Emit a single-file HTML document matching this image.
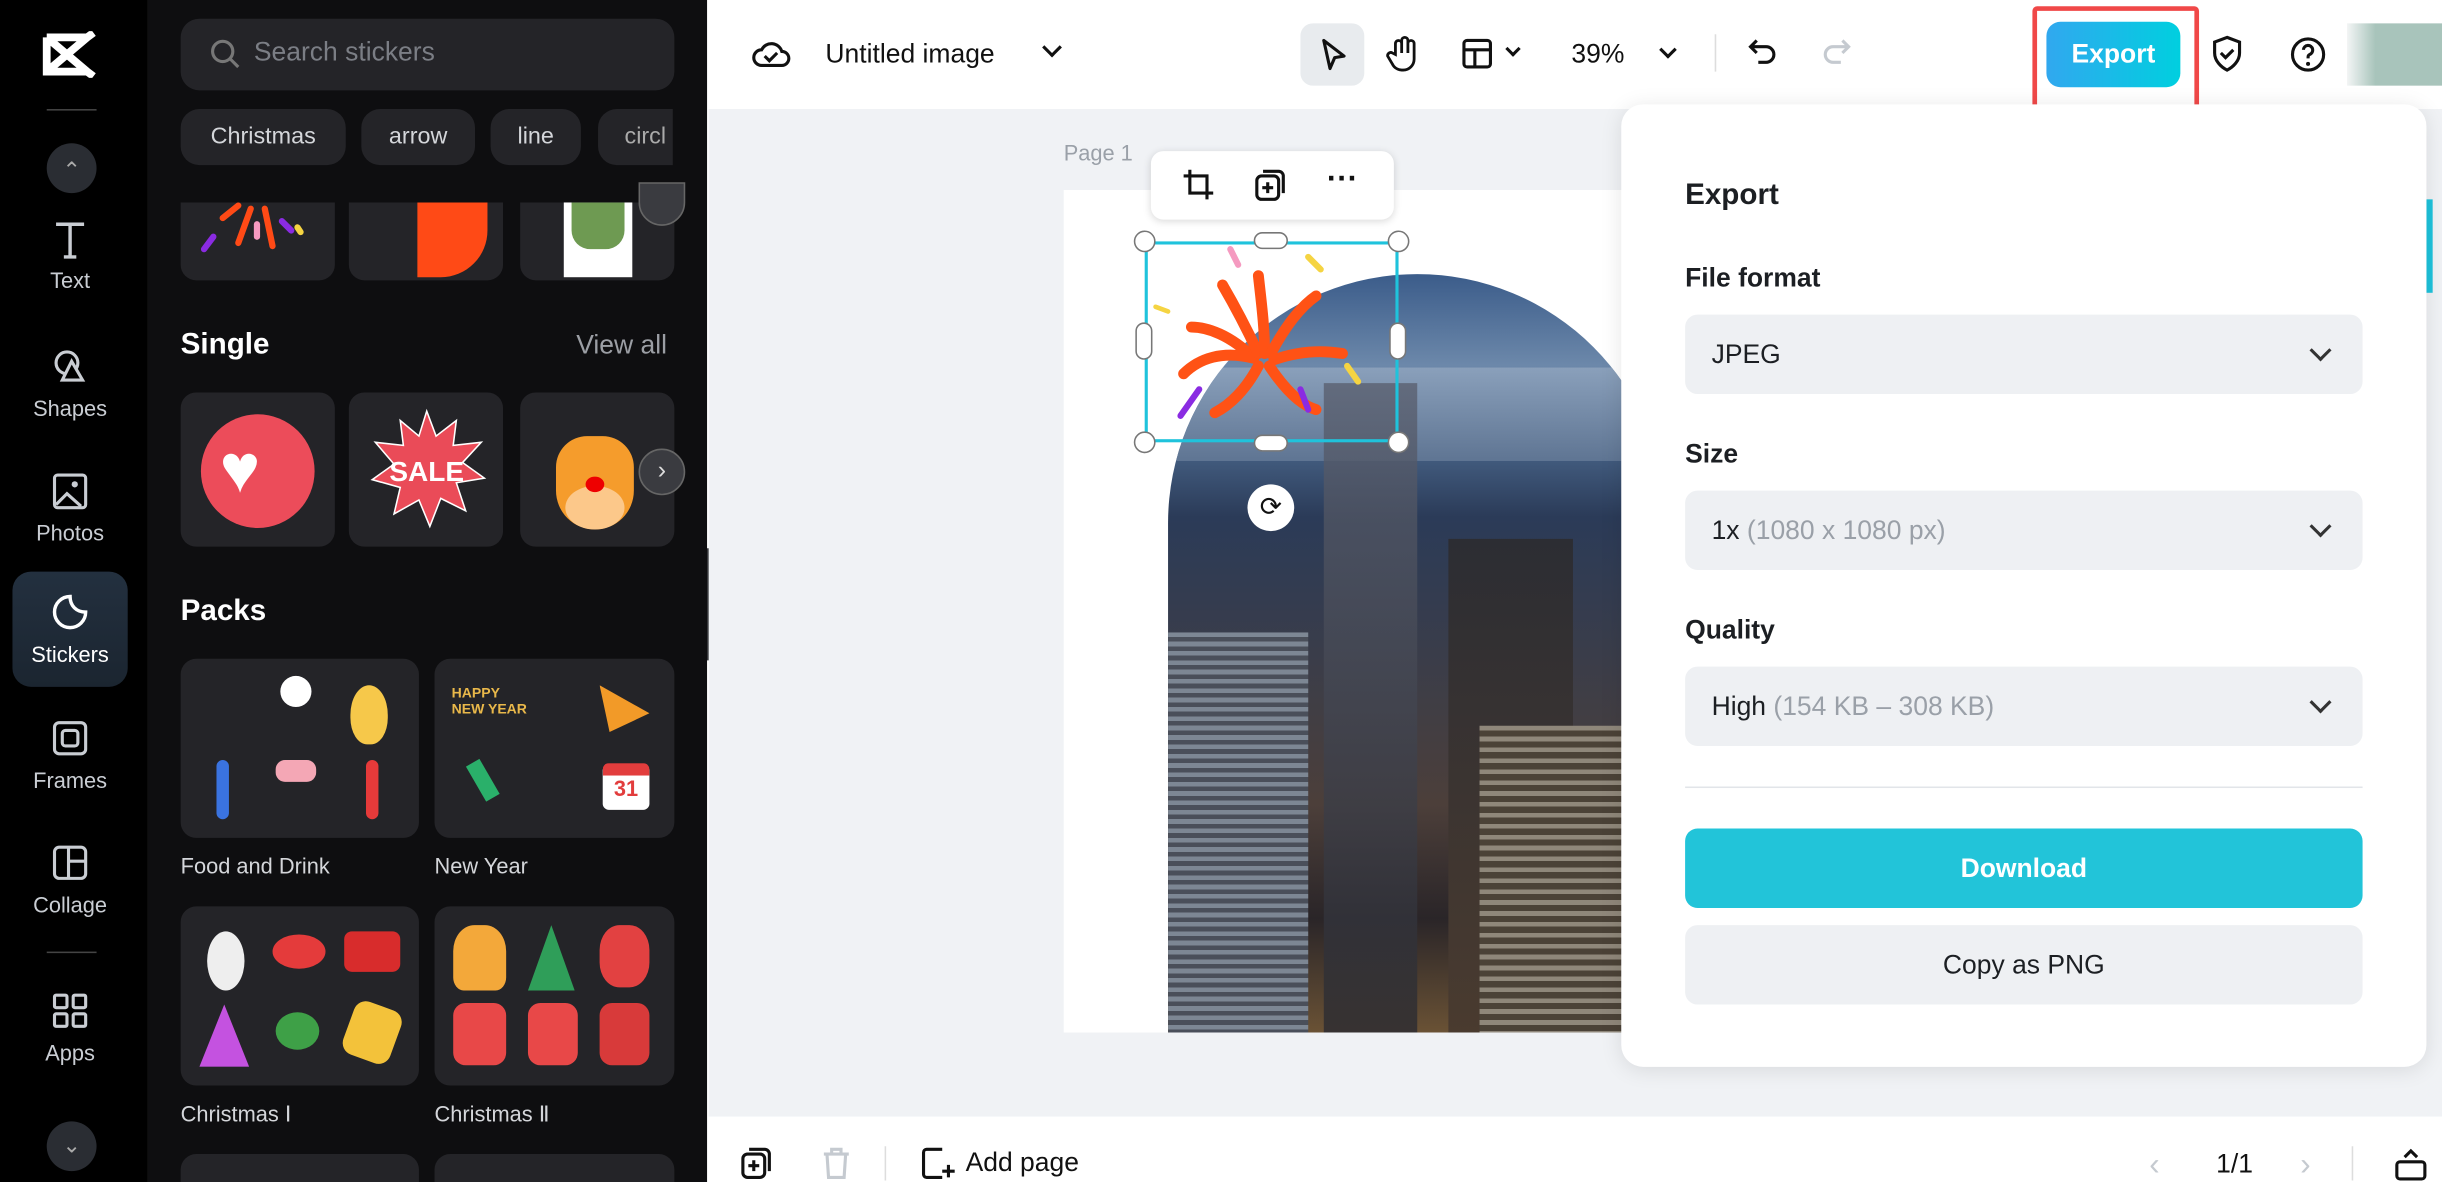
<!DOCTYPE html>
<html><head><meta charset="utf-8"><style>
*{box-sizing:border-box;margin:0;padding:0}
html,body{width:2442px;height:1182px;overflow:hidden;background:#fff;font-family:"Liberation Sans",sans-serif}
#w{position:absolute;left:0;top:0;width:1568px;height:759px;transform:scale(1.55740);transform-origin:0 0;overflow:hidden}
.a{position:absolute}
.nav{left:0;top:0;width:95px;height:759px;background:#000}
.ni{position:absolute;left:0;width:90px;text-align:center;color:#c9cdd3;font-size:14px}
.ni svg{display:block;margin:0 auto 4px}
.panel{left:95px;top:0;width:359px;height:759px;background:#0e0e10}
.card{position:absolute;background:#242428;border-radius:10px}
.chip{position:absolute;top:70px;height:36px;border-radius:12px;background:#242428;color:#d4d6da;font-size:15px;line-height:36px;text-align:center}
.h{position:absolute;color:#fff;font-weight:bold;font-size:19px}
.lbl{position:absolute;color:#d4d6da;font-size:14px}
.top{left:455px;top:0;width:1113px;height:70px;background:#fff}
.canvas{left:455px;top:70px;width:1113px;height:647px;background:#f0f2f5}
.bot{left:455px;top:717px;width:1113px;height:42px;background:#fff}
.dd{position:absolute;left:1082px;width:435px;height:51px;border-radius:8px;background:#eef0f3;font-size:17px;color:#1c1f23;line-height:51px;padding-left:17px}
.dd span{color:#9aa0a8}
.dd i{position:absolute;right:22px;top:18px;width:10px;height:10px;border-right:2px solid #333;border-bottom:2px solid #333;transform:rotate(45deg)}
.fl{position:absolute;left:1082px;font-size:17px;color:#1c1f23;font-weight:bold}
.hdl{position:absolute;width:14px;height:14px;border-radius:50%;background:#fff;border:1px solid #777}
</style></head><body><div id="w">
<div class="a nav">
 <svg class="a" style="left:27px;top:20px" width="36" height="30" viewBox="0 0 36 30"><path d="M3 4h26l4-3M3 4v22h26l4 3M3 4l26 22M29 4L3 26" stroke="#fff" stroke-width="5" fill="none"/></svg>
 <div class="a" style="left:30px;top:70px;width:32px;height:1px;background:#444"></div>
 <div class="a" style="left:30px;top:92px;width:32px;height:32px;border-radius:50%;background:#2a2d33;color:#aaa;text-align:center;line-height:34px;font-size:14px">&#8963;</div>
 <div class="ni" style="top:140px"><svg width="26" height="28"><path d="M4 4h18M13 4v21M9 25h8" stroke="#c9cdd3" stroke-width="2.2" fill="none"/></svg>Text</div>
 <div class="ni" style="top:222px"><svg width="26" height="28"><circle cx="11" cy="11" r="7" stroke="#c9cdd3" stroke-width="2" fill="none"/><path d="M14 10l7 12H8z" stroke="#c9cdd3" stroke-width="2" fill="#000"/></svg>Shapes</div>
 <div class="ni" style="top:302px"><svg width="26" height="28"><rect x="3" y="3" width="20" height="21" rx="2" stroke="#c9cdd3" stroke-width="2" fill="none"/><path d="M4 22l7-7 9 8" stroke="#c9cdd3" stroke-width="2" fill="none"/><circle cx="16" cy="9" r="2" fill="#c9cdd3"/></svg>Photos</div>
 <div class="a" style="left:8px;top:367px;width:74px;height:74px;border-radius:12px;background:linear-gradient(#23303f,#1b2530)"></div>
 <div class="ni" style="top:380px;color:#fff"><svg width="26" height="28"><path d="M13 3a10 10 0 1 0 10 10c-6 0-10-4-10-10z" stroke="#fff" stroke-width="2.2" fill="none"/></svg>Stickers</div>
 <div class="ni" style="top:461px"><svg width="26" height="28"><rect x="3" y="3" width="20" height="20" rx="3" stroke="#c9cdd3" stroke-width="2" fill="none"/><rect x="8" y="8" width="10" height="10" rx="2" stroke="#c9cdd3" stroke-width="2" fill="none"/></svg>Frames</div>
 <div class="ni" style="top:541px"><svg width="26" height="28"><rect x="3" y="3" width="20" height="20" rx="3" stroke="#c9cdd3" stroke-width="2" fill="none"/><path d="M12 3v20M12 12h11" stroke="#c9cdd3" stroke-width="2"/></svg>Collage</div>
 <div class="a" style="left:30px;top:611px;width:32px;height:1px;background:#444"></div>
 <div class="ni" style="top:636px"><svg width="26" height="28"><g stroke="#c9cdd3" stroke-width="2" fill="none"><rect x="3" y="3" width="8" height="8" rx="1"/><rect x="15" y="3" width="8" height="8" rx="1"/><rect x="3" y="15" width="8" height="8" rx="1"/><rect x="15" y="15" width="8" height="8" rx="1"/></g></svg>Apps</div>
 <div class="a" style="left:30px;top:720px;width:32px;height:32px;border-radius:50%;background:#2a2d33;color:#aaa;text-align:center;line-height:30px;font-size:14px">&#8964;</div>
</div>
<div class="a panel">
 <div class="card" style="left:21px;top:12px;width:317px;height:46px;border-radius:12px"></div>
 <svg class="a" style="left:40px;top:25px" width="20" height="20"><circle cx="8" cy="8" r="6.5" stroke="#777" stroke-width="2" fill="none"/><path d="M13 13l5 5" stroke="#777" stroke-width="2"/></svg>
 <div class="a" style="left:68px;top:24px;color:#7b7e85;font-size:17px">Search stickers</div>
 <div class="chip" style="left:21px;width:106px">Christmas</div>
 <div class="chip" style="left:137px;width:73px">arrow</div>
 <div class="chip" style="left:220px;width:58px">line</div>
 <div class="chip" style="left:289px;width:48px;text-align:left;padding-left:17px;overflow:hidden;color:#aaa;border-radius:12px 0 0 12px">circl</div>
 <div class="card" style="left:21px;top:130px;width:99px;height:50px;border-radius:0 0 10px 10px"></div>
 <div class="card" style="left:129px;top:130px;width:99px;height:50px;border-radius:0 0 10px 10px"></div>
 <div class="card" style="left:239px;top:130px;width:99px;height:50px;border-radius:0 0 10px 10px"></div>
 <svg class="a" style="left:30px;top:130px" width="80" height="36"><g stroke-linecap="round" fill="none" stroke-width="4"><path d="M28 2l-10 8" stroke="#ff4a16"/><path d="M36 4l-8 22" stroke="#ff4a16"/><path d="M45 4l5 24" stroke="#ff4a16"/><path d="M12 22l-6 8" stroke="#8a2be2"/><path d="M40 14v8" stroke="#f59ac0"/><path d="M56 12l6 6" stroke="#8a2be2"/><path d="M66 16l2 3" stroke="#f5d442"/></g></svg>
 <div class="a" style="left:173px;top:130px;width:45px;height:48px;background:#ff4a16;border-radius:0 0 30px 0"></div>
 <div class="a" style="left:267px;top:130px;width:44px;height:48px;background:#fff"></div>
 <div class="a" style="left:272px;top:130px;width:34px;height:30px;background:#6e9a52;border-radius:0 0 12px 12px"></div>
 <div class="h" style="left:21px;top:211px">Single</div>
 <div class="a" style="left:275px;top:212px;color:#9b9ea4;font-size:17px">View all</div>
 <div class="card" style="left:21px;top:252px;width:99px;height:99px"></div>
 <div class="card" style="left:129px;top:252px;width:99px;height:99px"></div>
 <div class="card" style="left:239px;top:252px;width:99px;height:99px"></div>
 <div class="a" style="left:34px;top:266px;width:73px;height:73px;border-radius:50%;background:#ec4c5a"></div>
 <div class="a" style="left:46px;top:280px;color:#fff;font-size:44px;line-height:44px">&#9829;</div>
 <svg class="a" style="left:140px;top:262px" width="78" height="78" viewBox="0 0 78 78"><polygon points="39,2 45,18 58,8 56,24 74,22 62,35 76,45 58,48 64,66 48,58 41,76 34,59 18,68 22,51 4,46 18,36 6,22 24,24 22,8 34,18" fill="#ea4b58" stroke="#fff" stroke-width="1"/><text x="39" y="47" font-size="18" font-weight="bold" fill="#fff" text-anchor="middle" font-family="Liberation Sans">SALE</text></svg>
 <div class="a" style="left:262px;top:280px;width:50px;height:60px;border-radius:20px 20px 25px 25px;background:#f59c2c"></div>
 <div class="a" style="left:268px;top:312px;width:38px;height:28px;border-radius:50%;background:#fcc88a"></div>
 <div class="a" style="left:281px;top:306px;width:12px;height:10px;border-radius:50%;background:#e00"></div>
 <div class="a" style="left:315px;top:288px;width:30px;height:30px;border-radius:50%;background:#3a3b40;border:1px solid #666;color:#ddd;text-align:center;line-height:28px">&#8250;</div>
 <div class="a" style="left:315px;top:117px;width:30px;height:28px;border-radius:0 0 15px 15px;background:#3a3b40;border:1px solid #666"></div>
 <div class="h" style="left:21px;top:382px">Packs</div>
 <div class="card" style="left:21px;top:423px;width:153px;height:115px"></div>
 <div class="card" style="left:184px;top:423px;width:154px;height:115px"></div>
 <div class="a" style="left:85px;top:434px;width:20px;height:20px;border-radius:50%;background:#fff"></div>
 <div class="a" style="left:130px;top:440px;width:24px;height:38px;border-radius:50% 50% 45% 45%;background:#f6c84a"></div>
 <div class="a" style="left:82px;top:488px;width:26px;height:14px;background:#f4a7b5;border-radius:6px"></div>
 <div class="a" style="left:44px;top:488px;width:8px;height:38px;background:#3a73e0;border-radius:4px"></div>
 <div class="a" style="left:140px;top:488px;width:8px;height:38px;background:#e63a3a;border-radius:4px"></div>
 <div class="a" style="left:195px;top:440px;color:#e9b84a;font-size:9px;font-weight:bold;line-height:10px">HAPPY<br>NEW YEAR</div>
 <div class="a" style="left:290px;top:440px;width:32px;height:30px;background:#f29a28;clip-path:polygon(0 0,100% 60%,20% 100%)"></div>
 <div class="a" style="left:292px;top:490px;width:30px;height:30px;background:#fff;border-top:8px solid #e23d3d;border-radius:4px;color:#e23d3d;font-weight:bold;font-size:14px;text-align:center">31</div>
 <div class="a" style="left:210px;top:488px;width:10px;height:26px;background:#2ab06a;transform:rotate(-30deg)"></div>
 <div class="lbl" style="left:21px;top:548px">Food and Drink</div>
 <div class="lbl" style="left:184px;top:548px">New Year</div>
 <div class="card" style="left:21px;top:582px;width:153px;height:115px"></div>
 <div class="card" style="left:184px;top:582px;width:154px;height:115px"></div>
 <div class="a" style="left:38px;top:598px;width:24px;height:38px;border-radius:50%;background:#eee"></div>
 <div class="a" style="left:80px;top:600px;width:34px;height:22px;border-radius:50%;background:#e43b3b"></div>
 <div class="a" style="left:126px;top:598px;width:36px;height:26px;border-radius:5px;background:#d82c2c"></div>
 <div class="a" style="left:33px;top:645px;width:32px;height:40px;background:#c452e0;clip-path:polygon(50% 0,100% 100%,0 100%)"></div>
 <div class="a" style="left:82px;top:650px;width:28px;height:24px;border-radius:50%;background:#3ea047"></div>
 <div class="a" style="left:128px;top:645px;width:32px;height:36px;border-radius:8px;background:#f3c23a;transform:rotate(20deg)"></div>
 <div class="a" style="left:196px;top:594px;width:34px;height:42px;border-radius:40% 40% 20% 20%;background:#f3a83a"></div>
 <div class="a" style="left:244px;top:594px;width:30px;height:42px;background:#2f9e59;clip-path:polygon(50% 0,100% 100%,0 100%)"></div>
 <div class="a" style="left:290px;top:594px;width:32px;height:40px;border-radius:40%;background:#e24141"></div>
 <div class="a" style="left:196px;top:644px;width:34px;height:40px;border-radius:8px;background:#e84848"></div>
 <div class="a" style="left:244px;top:644px;width:32px;height:40px;border-radius:8px;background:#e84848"></div>
 <div class="a" style="left:290px;top:644px;width:32px;height:40px;border-radius:8px;background:#d83a3a"></div>
 <div class="lbl" style="left:21px;top:707px">Christmas Ⅰ</div>
 <div class="lbl" style="left:184px;top:707px">Christmas Ⅱ</div>
 <div class="card" style="left:21px;top:741px;width:153px;height:30px"></div>
 <div class="card" style="left:184px;top:741px;width:154px;height:30px"></div>
</div>
<div class="a" style="left:454px;top:352px;width:12px;height:72px;background:#2a2b2f;border-radius:0 8px 8px 0;color:#888;font-size:12px;line-height:72px;text-align:center">‹</div>
<div class="a top">
 <svg class="a" style="left:27px;top:24px" width="26" height="22"><path d="M7 18a5 5 0 0 1 0-10 7 7 0 0 1 13 1 4.5 4.5 0 0 1 0 9z" stroke="#111" stroke-width="2" fill="none"/><path d="M9 12l3 3 5-5" stroke="#111" stroke-width="2" fill="none"/></svg>
 <div class="a" style="left:75px;top:25px;font-size:17px;color:#111">Untitled image</div>
 <div class="a" style="left:216px;top:26px;width:9px;height:9px;border-right:2px solid #111;border-bottom:2px solid #111;transform:rotate(45deg)"></div>
 <div class="a" style="left:380px;top:15px;width:41px;height:40px;border-radius:8px;background:#e8ebee"></div>
 <svg class="a" style="left:390px;top:23px" width="22" height="24"><path d="M5 3l13 10-6 1-3 7z" stroke="#111" stroke-width="2" fill="none" stroke-linejoin="round"/></svg>
 <svg class="a" style="left:434px;top:22px" width="24" height="26"><path d="M7 13V6a2 2 0 0 1 4 0v6V4a2 2 0 0 1 4 0v8V6a2 2 0 0 1 4 0v10a7 7 0 0 1-7 7h-1a7 7 0 0 1-6-4l-3-5a2 2 0 0 1 3-2z" stroke="#111" stroke-width="1.8" fill="none"/></svg>
 <svg class="a" style="left:483px;top:24px" width="22" height="22"><rect x="2" y="2" width="17" height="17" rx="2" stroke="#111" stroke-width="2" fill="none"/><path d="M2 8h17M9 8v11" stroke="#111" stroke-width="2"/></svg>
 <div class="a" style="left:513px;top:28px;width:7px;height:7px;border-right:2px solid #111;border-bottom:2px solid #111;transform:rotate(45deg)"></div>
 <div class="a" style="left:554px;top:25px;font-size:17px;color:#111">39%</div>
 <div class="a" style="left:612px;top:28px;width:8px;height:8px;border-right:2px solid #111;border-bottom:2px solid #111;transform:rotate(45deg)"></div>
 <div class="a" style="left:646px;top:22px;width:1px;height:24px;background:#ddd"></div>
 <svg class="a" style="left:666px;top:23px" width="22" height="22"><path d="M7 3L3 7l4 4M3 7h10a5 5 0 0 1 0 10H8" stroke="#111" stroke-width="2" fill="none"/></svg>
 <svg class="a" style="left:713px;top:23px" width="22" height="22"><path d="M15 3l4 4-4 4M19 7H9a5 5 0 0 0 0 10h5" stroke="#c5cad0" stroke-width="2" fill="none"/></svg>
 <div class="a" style="left:850px;top:4px;width:107px;height:67px;border:3px solid #f04848;border-radius:3px"></div>
 <div class="a" style="left:859px;top:14px;width:86px;height:42px;border-radius:9px;background:linear-gradient(90deg,#31a8ef,#00cfdf);color:#fff;font-weight:bold;font-size:17px;text-align:center;line-height:42px">Export</div>
 <svg class="a" style="left:964px;top:22px" width="22" height="26"><path d="M11 2l8 3v7c0 5-4 9-8 11-4-2-8-6-8-11V5z" stroke="#111" stroke-width="2" fill="none"/><path d="M7 12l3 3 5-5" stroke="#111" stroke-width="2" fill="none"/></svg>
 <svg class="a" style="left:1015px;top:23px" width="24" height="24"><circle cx="12" cy="12" r="10" stroke="#111" stroke-width="2" fill="none"/><path d="M9 9a3 3 0 1 1 4 3c-1 .5-1 1-1 2.5" stroke="#111" stroke-width="2" fill="none"/><circle cx="12" cy="18" r="1.3" fill="#111"/></svg>
 <div class="a" style="left:1052px;top:15px;width:61px;height:40px;background:linear-gradient(90deg,#f3f5f5,#a8c4bb 30%,#a8c4bb)"></div>
</div>
<div class="a canvas">
 <div class="a" style="left:228px;top:20px;color:#9aa0a8;font-size:14px">Page 1</div>
 <div class="a" style="left:228px;top:52px;width:600px;height:541px;background:#fff"></div>
 <div class="a" style="left:295px;top:106px;width:320px;height:487px;border-radius:160px 160px 0 0;overflow:hidden;background:linear-gradient(180deg,#3b5c8a 0%,#6c88aa 12%,#4e6d93 20%,#2b3b58 32%,#3a3d4a 50%,#4c3f3a 70%,#2a2528 85%,#6a5235 100%)">
  <div class="a" style="left:0;top:60px;width:320px;height:60px;background:linear-gradient(#8aa0bb,#5f7593)"></div>
  <div class="a" style="left:100px;top:70px;width:60px;height:420px;background:linear-gradient(#5a6070,#2a2a30);opacity:.8"></div>
  <div class="a" style="left:0;top:230px;width:90px;height:260px;background:repeating-linear-gradient(#7d8794 0 3px,#4a4f5a 3px 6px)"></div>
  <div class="a" style="left:180px;top:170px;width:80px;height:320px;background:linear-gradient(#2c2d33,#4a3b2f)"></div>
  <div class="a" style="left:200px;top:290px;width:100px;height:200px;background:repeating-linear-gradient(#8f877a 0 3px,#4b4237 3px 7px)"></div>
 </div>
 <div class="a" style="left:284px;top:27px;width:156px;height:44px;border-radius:8px;background:#fff;box-shadow:0 1px 5px rgba(0,0,0,.15)"></div>
 <svg class="a" style="left:304px;top:38px" width="22" height="22"><path d="M5 1v15h15M1 5h15v15" stroke="#111" stroke-width="2" fill="none"/></svg>
 <svg class="a" style="left:350px;top:38px" width="22" height="22"><rect x="2" y="5" width="14" height="15" rx="3" stroke="#111" stroke-width="2" fill="none"/><path d="M6 2h10a3 3 0 0 1 3 3v11M9 9v7M5.5 12.5h7" stroke="#111" stroke-width="2" fill="none"/></svg>
 <div class="a" style="left:397px;top:34px;font-size:20px;font-weight:bold;color:#111">···</div>
 <div class="a" style="left:280px;top:85px;width:163px;height:129px;border:2px solid #1fc3dc"></div>
 <svg class="a" style="left:285px;top:85px" width="150" height="125" viewBox="0 0 150 125"><g stroke-linecap="round" fill="none"><path d="M65 75C50 60 35 55 25 55" stroke="#ff5215" stroke-width="7"/><path d="M65 75C45 70 30 75 20 85" stroke="#ff5215" stroke-width="7"/><path d="M68 72C60 55 52 40 45 28" stroke="#ff5215" stroke-width="7"/><path d="M72 72C72 55 70 40 68 22" stroke="#ff5215" stroke-width="7"/><path d="M76 72C85 55 95 42 105 35" stroke="#ff5215" stroke-width="7"/><path d="M78 76C95 70 110 70 122 72" stroke="#ff5215" stroke-width="7"/><path d="M68 80C60 95 50 105 40 110" stroke="#ff5215" stroke-width="7"/><path d="M75 80C85 95 95 105 105 108" stroke="#ff5215" stroke-width="7"/><path d="M30 95L18 112" stroke="#8a2be2" stroke-width="4"/><path d="M100 10L108 18" stroke="#f5d442" stroke-width="4"/><path d="M125 80L132 90" stroke="#f5d442" stroke-width="4"/><path d="M95 95L100 108" stroke="#8a2be2" stroke-width="4"/><path d="M50 5L55 15" stroke="#f59ac0" stroke-width="4"/><path d="M10 45L2 42" stroke="#f5d442" stroke-width="3"/></g></svg>
 <div class="hdl" style="left:273px;top:78px"></div><div class="hdl" style="left:436px;top:78px"></div>
 <div class="hdl" style="left:273px;top:207px"></div><div class="hdl" style="left:436px;top:207px"></div>
 <div class="a" style="left:350px;top:79px;width:22px;height:11px;border-radius:6px;background:#fff;border:1px solid #777"></div>
 <div class="a" style="left:350px;top:209px;width:22px;height:11px;border-radius:6px;background:#fff;border:1px solid #777"></div>
 <div class="a" style="left:274px;top:137px;width:11px;height:24px;border-radius:6px;background:#fff;border:1px solid #777"></div>
 <div class="a" style="left:437px;top:137px;width:11px;height:24px;border-radius:6px;background:#fff;border:1px solid #777"></div>
 <div class="a" style="left:346px;top:241px;width:30px;height:30px;border-radius:50%;background:#fff;color:#111;text-align:center;line-height:30px;font-size:17px">⟳</div>
 <div class="a" style="left:1103px;top:58px;width:4px;height:60px;background:#1fc3dc"></div>
</div>
<div class="a" style="left:1041px;top:67px;width:517px;height:618px;border-radius:14px;background:#fff;box-shadow:0 2px 14px rgba(0,0,0,.1)"></div>
<div class="a" style="left:1082px;top:115px;font-size:19px;font-weight:bold;color:#1c1f23">Export</div>
<div class="fl" style="top:169px">File format</div>
<div class="dd" style="top:202px">JPEG<i></i></div>
<div class="fl" style="top:282px">Size</div>
<div class="dd" style="top:315px">1x <span>(1080 x 1080 px)</span><i></i></div>
<div class="fl" style="top:395px">Quality</div>
<div class="dd" style="top:428px">High <span>(154 KB – 308 KB)</span><i></i></div>
<div class="a" style="left:1082px;top:505px;width:435px;height:1px;background:#e2e5e9"></div>
<div class="a" style="left:1082px;top:532px;width:435px;height:51px;border-radius:8px;background:#22c4d9;color:#fff;font-size:17px;font-weight:bold;text-align:center;line-height:51px">Download</div>
<div class="a" style="left:1082px;top:594px;width:435px;height:51px;border-radius:8px;background:#eef0f3;color:#1c1f23;font-size:17px;text-align:center;line-height:51px">Copy as PNG</div>
<div class="a bot">
 <svg class="a" style="left:20px;top:19px" width="22" height="22"><rect x="2" y="5" width="14" height="15" rx="3" stroke="#111" stroke-width="2" fill="none"/><path d="M6 2h10a3 3 0 0 1 3 3v11M9 9v7M5.5 12.5h7" stroke="#111" stroke-width="2" fill="none"/></svg>
 <svg class="a" style="left:72px;top:19px" width="20" height="22"><path d="M2 5h16M7 5V2h6v3M4 5l1 15h10l1-15" stroke="#c5cad0" stroke-width="2" fill="none"/></svg>
 <div class="a" style="left:113px;top:19px;width:1px;height:22px;background:#ddd"></div>
 <svg class="a" style="left:136px;top:18px" width="24" height="24"><path d="M14 3H4a2 2 0 0 0-2 2v14a2 2 0 0 0 2 2h10M18 13v8M14 17h8" stroke="#111" stroke-width="2" fill="none"/></svg>
 <div class="a" style="left:165px;top:20px;font-size:17px;color:#111">Add page</div>
 <div class="a" style="left:925px;top:20px;font-size:20px;color:#c5cad0">‹</div>
 <div class="a" style="left:968px;top:21px;font-size:17px;color:#111">1/1</div>
 <div class="a" style="left:1022px;top:20px;font-size:20px;color:#c5cad0">›</div>
 <div class="a" style="left:1055px;top:19px;width:1px;height:22px;background:#ddd"></div>
 <svg class="a" style="left:1082px;top:18px" width="22" height="24"><path d="M7 8l4-4 4 4" stroke="#111" stroke-width="2" fill="none"/><rect x="2" y="11" width="18" height="11" rx="2" stroke="#111" stroke-width="2" fill="none"/></svg>
</div>
</div></body></html>
